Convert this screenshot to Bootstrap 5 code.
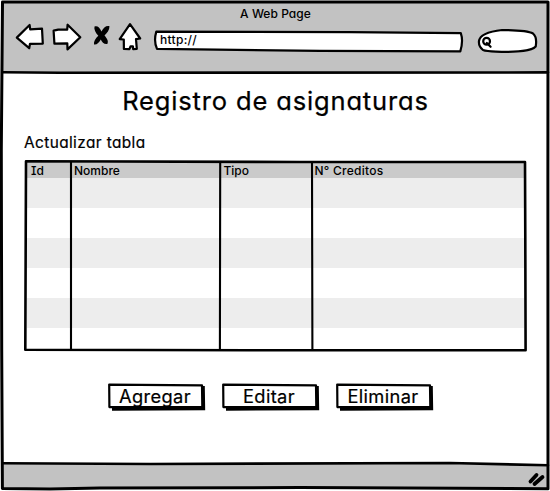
<!DOCTYPE html>
<html lang="es">
<head>
<meta charset="utf-8">
<meta name="viewport" content="width=device-width, initial-scale=1">
<title>Registro de asignaturas</title>
<link href="https://cdn.jsdelivr.net/npm/bootstrap@5.3.0/dist/css/bootstrap.min.css" rel="stylesheet">
<style>
  body { font-family: Inter, "Open Sans", sans-serif; font-feature-settings: "cv11", "cv08"; font-weight: 400; color: #000; line-height: 1; overflow: hidden; }
  svg { display: block; overflow: visible; }
  .ink { fill: none; stroke: #000; stroke-width: 2.2; stroke-linecap: round; stroke-linejoin: round; }
  .paper { fill: #fff; }
  .ink-heavy { stroke-width: 3; }
  .ink-grip { stroke-width: 3.8; }
  .ink-rule { stroke-width: 2.1; stroke-linecap: butt; }
  .ink-table { stroke-width: 2.6; }
  .sketch-window { width: 550px; height: 491px; padding: 2px 2px 2px 3px; }
  .chrome { background: #c2c2c2; }
  .chrome-top { height: 71px; padding-top: 5px; }
  .chrome-bottom { height: 25px; padding: 9px 3px 0 0; }
  .window-title { font-size: 12px; font-weight: 500; letter-spacing: .05px; line-height: 14px; }
  .toolbar { padding: 0 9px 0 12px; height: 30px; margin-top: 2px; }
  .url-box { width: 310px; height: 22px; margin-top: 7px; }
  .url-text { font-size: 12px; font-weight: 500; padding: 4px 0 0 6px; letter-spacing: .3px; }
  .search-box { margin: 5px 0 0 12px; }
  .page-title { font-size: 25.5px; font-weight: 400; letter-spacing: .85px; line-height: 32px; padding-top: 12px; -webkit-text-stroke: .25px #000; }
  .subtitle { font-size: 15.4px; line-height: 20px; margin: 16px 0 0 21px; letter-spacing: .4px; -webkit-text-stroke: .2px #000; }
  .grid-box { width: 502px; height: 191px; margin: 7px 0 0 21px; padding: 3px 2px 2px 3px; }
  .grid-head { height: 15px; background: #cacaca; font-size: 12px; font-weight: 500; line-height: 15px; }
  .grid-row { height: 30px; }
  .grid-row:nth-child(even) { background: #ededed; }
  .grid-row:last-of-type { height: 21px; }
  .c1 { width: 43px; padding-left: 4px; } .c2 { width: 149.5px; padding-left: 4px; }
  .c3 { width: 92px; padding-left: 4px; } .c4 { padding-left: 3px; letter-spacing: .25px; }
  .actions { gap: 19px; margin: 32px 0 0 105px; }
  .sketch-btn { width: 95px; height: 26px; padding: 0 1px 0 0; border: 0; border-radius: 0; font-size: 18.3px; font-weight: 400; line-height: 27px; color: #000; letter-spacing: .35px; -webkit-text-stroke: .2px #000; }
  .sketch-btn span { position: relative; }
</style>
<script src="https://cdn.jsdelivr.net/npm/bootstrap@5.3.0/dist/js/bootstrap.bundle.min.js"></script>
</head>
<body class="bg-white">
<div class="sketch-window position-relative d-flex flex-column">
  <header class="chrome chrome-top">
    <div class="window-title text-center">A Web Page</div>
    <div class="toolbar d-flex align-items-start">
      <svg width="139" height="30" viewBox="15 23 139 30" aria-hidden="true">
        <path class="ink paper" d="M16.800 37.600 29.600 25l.6 4.300 11.800-.7.8 15-12.800.2-.8 4.400z"/>
        <path class="ink paper" d="M80.300 37.300 67.600 24.700l-.4 5-9-.1-4.600 1 .8 13 12.900-.2.2 6z"/>
        <path class="ink paper" d="M130 24.200 140.200 38.500l-4.200.6.8 9.800-3.600.2-.3-2.700-2.300-.1-1.200 2.800-5.500-.2-.1-9.400-4.100-.3z"/>
        <path d="M94.500 26.500C97 25.300 99.500 27 101.500 31.500 103.500 27.500 106 25.500 109.500 26.200 109.500 30 107 33 104.500 35.500 107 38.500 108.800 41 107.300 44 104 44.500 102 42 100.800 39.500 99 42.500 97 45 94 44.500 93.500 41.500 95.500 38.500 98.300 35.800 95.500 32.500 93.800 29.500 94.500 26.500Z"/>
      </svg>
      <div class="url-box position-relative">
        <svg class="position-absolute top-0 start-0" width="310" height="22" viewBox="154 30 310 22" aria-hidden="true"><path class="ink paper" d="M156.300 31.600 350 32.200 460.800 33.200Q463.500 41 460.300 51.300L320 50.800 157 48.900Q153.500 41 156.300 31.600Z"/></svg>
        <div class="url-text position-relative">http://</div>
      </div>
      <svg class="search-box" width="61" height="25" viewBox="476 28 61 25" aria-hidden="true">
        <path class="ink paper" d="M479 41C480 34.500 488 31.500 502 30 515 30 528 30.500 533 33.500 537 37 536.500 42 535.700 46.500 531 51.500 517 51.700 506 51.900 494 51.200 488 52 483 50 480 47.500 478.500 45 479 41Z"/>
        <circle class="ink" cx="486.600" cy="41.200" r="3.400"/><path class="ink" d="M486.800 43 490.600 46.800"/>
      </svg>
    </div>
  </header>
  <main class="flex-grow-1">
    <h1 class="page-title text-center mb-0">Registro de asignaturas</h1>
    <div class="subtitle">Actualizar tabla</div>
    <section class="grid-box position-relative">
      <div class="grid-head d-flex">
        <div class="c1">Id</div><div class="c2">Nombre</div><div class="c3">Tipo</div><div class="c4">N° Creditos</div>
      </div>
      <div class="grid-row"></div><div class="grid-row"></div><div class="grid-row"></div>
      <div class="grid-row"></div><div class="grid-row"></div><div class="grid-row"></div>
      <svg class="position-absolute top-0 start-0" width="502" height="191" viewBox="24 160 502 191" aria-hidden="true">
        <path class="ink ink-table" d="M26 161.300 300 162 525 162 525.300 240 525.600 350.300 250 350.200 25.300 349.700Z"/>
        <path class="ink ink-rule" d="M71 162 71 350.500M220.200 162 219.900 349.500M312 162 312.400 350"/>
      </svg>
    </section>
    <div class="actions d-flex">
      <button class="btn sketch-btn position-relative"><svg class="position-absolute top-0 start-0" width="98" height="28" aria-hidden="true"><path d="M4 23H94V3H96.800L97.200 27.200 4 27.700Z"/><path class="ink paper" d="M1.200 1.600 94 2.300 94.300 24 1.400 24.100Z"/></svg><span>Agregar</span></button>
      <button class="btn sketch-btn position-relative"><svg class="position-absolute top-0 start-0" width="98" height="28" aria-hidden="true"><path d="M4 23H94V3H96.800L97.200 27.200 4 27.700Z"/><path class="ink paper" d="M1.200 1.600 94 2.300 94.300 24 1.400 24.100Z"/></svg><span>Editar</span></button>
      <button class="btn sketch-btn position-relative"><svg class="position-absolute top-0 start-0" width="98" height="28" aria-hidden="true"><path d="M4 23H94V3H96.800L97.200 27.200 4 27.700Z"/><path class="ink paper" d="M1.200 1.600 94 2.300 94.300 24 1.400 24.100Z"/></svg><span>Eliminar</span></button>
    </div>
  </main>
  <footer class="chrome chrome-bottom d-flex justify-content-end">
    <svg width="16" height="13" viewBox="528 471 16 13" aria-hidden="true"><path class="ink ink-grip" d="M535.500 473 529.500 479.500M541.500 475 533.500 482"/></svg>
  </footer>
  <svg class="position-absolute top-0 start-0 pe-none" width="550" height="491" viewBox="0 0 550 491" aria-hidden="true">
    <path class="ink ink-heavy" d="M2.500 2 548 2 547.900 180 548 488.700 300 487.600 100 488 50 489 2.400 488.500 1.700 350 1.300 150Z"/>
    <path class="ink ink-table" d="M3 72.300 60 72.800 548 72.400M3 463.300 150 464 450 463 548 465.300"/>
  </svg>
</div>
</body>
</html>
